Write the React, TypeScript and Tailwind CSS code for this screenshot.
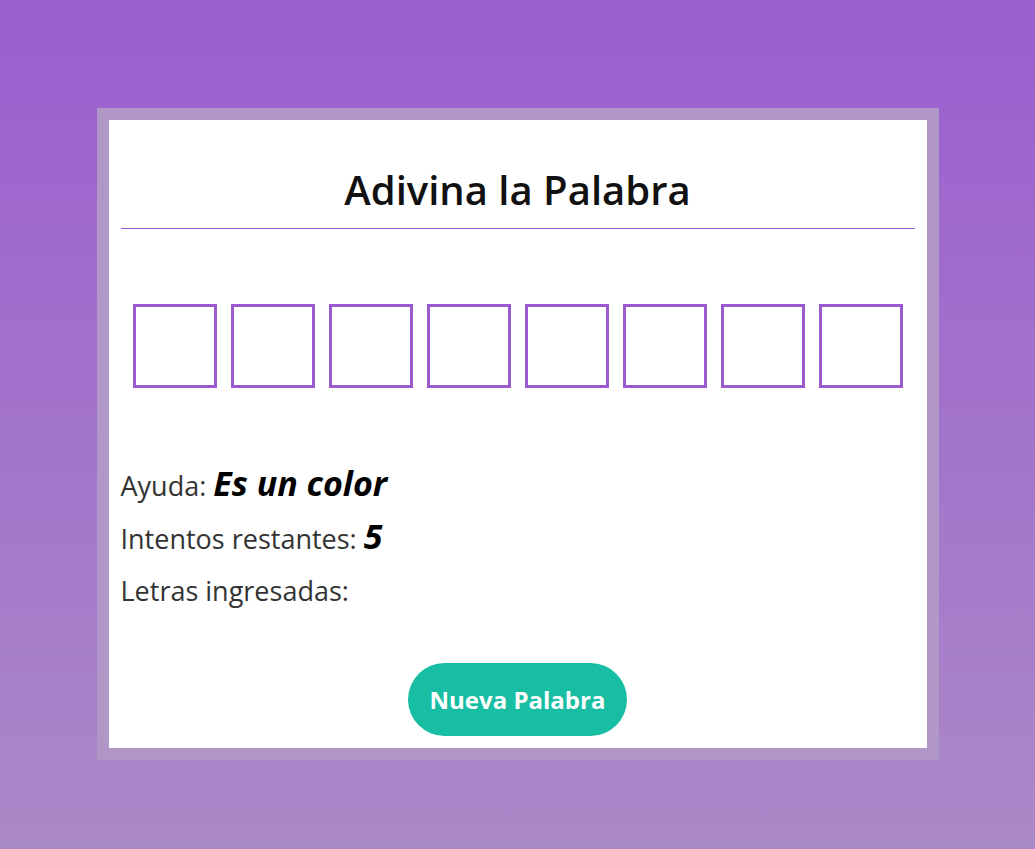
export default function App() {
    const letters = Array.from({ length: 8 })

    return (
        <div className="min-h-screen bg-[linear-gradient(to_bottom,#9b5ecf,#aa89c7)] pt-[108px] font-['Open_Sans',sans-serif]">
            <div className="mx-auto w-[842px] border-[12px] border-[#b097c8] bg-white px-[12px] pb-[12px] pt-[44px]">
                {/* Title */}
                <h1 className="border-b border-[#9b59d0] pb-[12px] text-center text-[40px] leading-[1.3] font-semibold text-[#111]">
                    Adivina la Palabra
                </h1>

                {/* Word boxes */}
                <div className="mt-[75px] flex justify-center gap-[14px]">
                    {letters.map((_, i) => (
                        <div key={i} className="h-[84px] w-[84px] border-[3px] border-[#9b59d0]" />
                    ))}
                </div>

                {/* Info */}
                <div className="mt-[72px] text-[27px] text-[#333]">
                    <p className="leading-[1.362]">
                        Ayuda: <span className="text-[34px] font-bold italic text-black">Es un color</span>
                    </p>
                    <p className="mt-[7px] leading-[1.362]">
                        Intentos restantes: <span className="text-[34px] font-bold italic text-black">5</span>
                    </p>
                    <p className="mt-[13px] leading-[1.362]">Letras ingresadas:</p>
                </div>

                <div className="mt-[54px] flex justify-center">
                    <button className="h-[73px] w-[219px] rounded-full bg-[#17bea3] text-[24px] font-bold text-white">
                        Nueva Palabra
                    </button>
                </div>
            </div>
        </div>
    )
}
